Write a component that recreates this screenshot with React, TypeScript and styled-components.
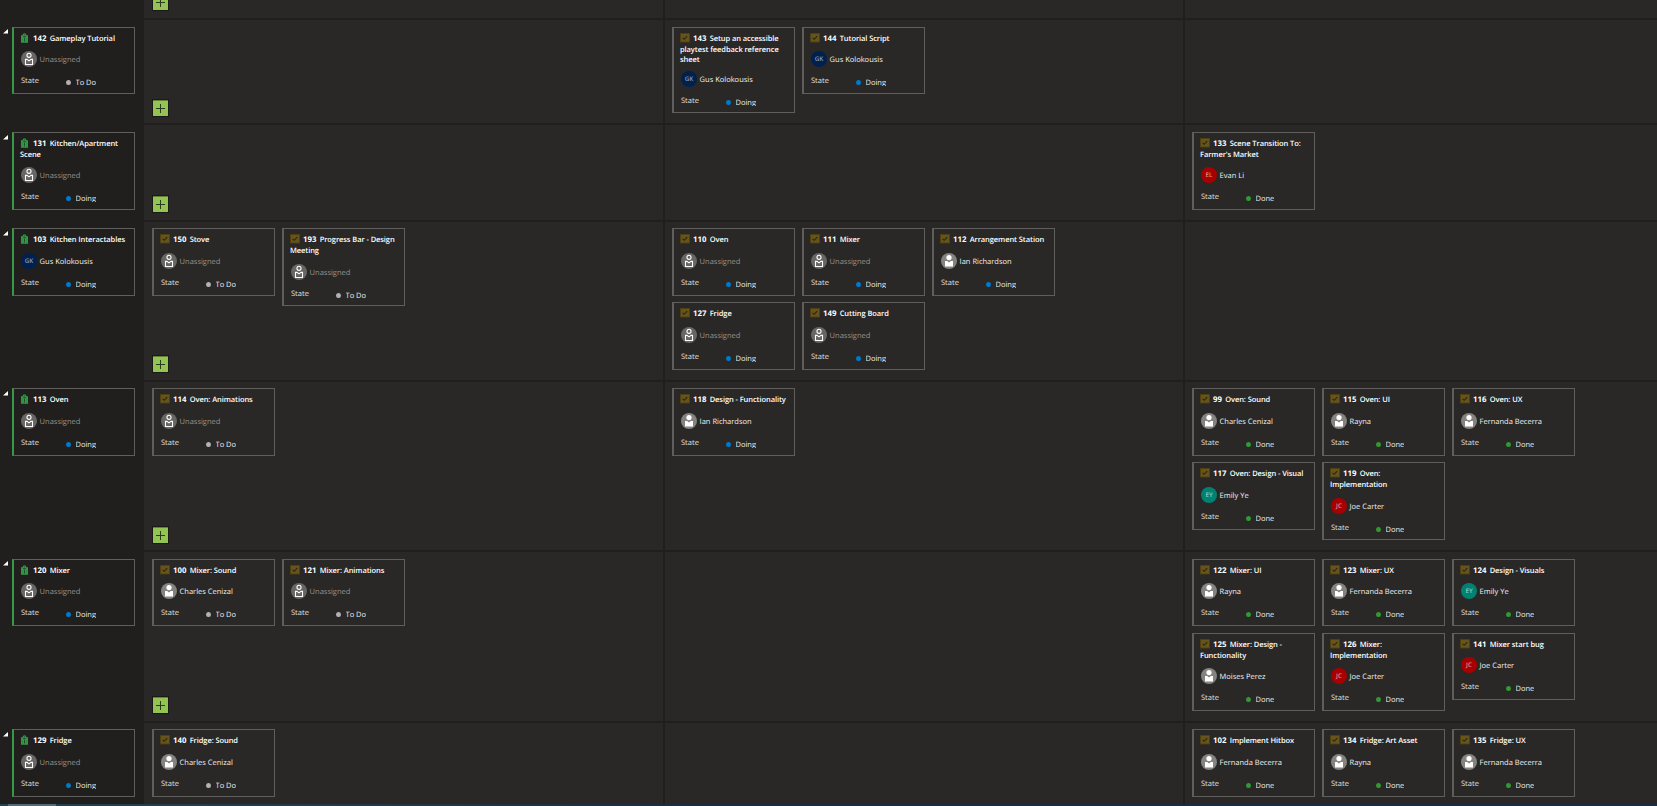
import React from 'react';
import styled, { createGlobalStyle } from 'styled-components';

const GlobalStyle = createGlobalStyle`
  * { box-sizing: border-box; }
  body {
    margin: 0;
    background: #201f1e;
    overflow: hidden;
    font-family: 'Open Sans', 'Noto Sans', sans-serif;
    text-rendering: geometricPrecision;
  }
`;

type Person = 'none' | 'gus' | 'evan' | 'ian' | 'charles' | 'rayna' | 'fernanda' | 'emily' | 'joe' | 'moises';
type State = 'To Do' | 'Doing' | 'Done';

interface Item {
  id: number;
  title: string[];
  who: Person;
  state: State;
}

interface Lane {
  height: number;
  top: number;
  line: number;
  cardHeight: number;
  tallFoot: number;
  plusGap: number;
  arrow: number;
  story: Item;
  columns: [Item[], Item[], Item[]];
}

const people: Record<Person, { name: string; initials?: string; color?: string; ink?: string }> = {
  none: { name: 'Unassigned' },
  gus: { name: 'Gus Kolokousis', initials: 'GK', color: '#002050', ink: '#8e9cb2' },
  evan: { name: 'Evan Li', initials: 'EL', color: '#a80000', ink: '#dc9090' },
  ian: { name: 'Ian Richardson' },
  charles: { name: 'Charles Cenizal' },
  rayna: { name: 'Rayna' },
  fernanda: { name: 'Fernanda Becerra' },
  emily: { name: 'Emily Ye', initials: 'EY', color: '#008272', ink: '#8accc3' },
  joe: { name: 'Joe Carter', initials: 'JC', color: '#a80000', ink: '#dc9090' },
  moises: { name: 'Moises Perez' },
};

const stateColors: Record<State, string> = { 'To Do': '#b2b2b2', Doing: '#007acc', Done: '#339933' };

const item = (id: number, title: string, who: Person, state: State): Item => ({
  id,
  title: title.split('|'),
  who,
  state,
});

const lanes: Lane[] = [
  {
    height: 105, top: 7, line: 10, cardHeight: 67, tallFoot: 0, plusGap: 7, arrow: 8,
    story: item(142, 'Gameplay Tutorial', 'none', 'To Do'),
    columns: [
      [],
      [
        item(143, 'Setup an accessible|playtest feedback reference|sheet', 'gus', 'Doing'),
        item(144, 'Tutorial Script', 'gus', 'Doing'),
      ],
      [],
    ],
  },
  {
    height: 97, top: 7, line: 11, cardHeight: 67, tallFoot: 0, plusGap: 8, arrow: 9,
    story: item(131, 'Kitchen/Apartment|Scene', 'none', 'Doing'),
    columns: [[], [], [item(133, "Scene Transition To:|Farmer's Market", 'evan', 'Done')]],
  },
  {
    height: 160, top: 6, line: 11, cardHeight: 68, tallFoot: -1, plusGap: 8, arrow: 8,
    story: item(103, 'Kitchen Interactables', 'gus', 'Doing'),
    columns: [
      [item(150, 'Stove', 'none', 'To Do'), item(193, 'Progress Bar - Design|Meeting', 'none', 'To Do')],
      [
        item(110, 'Oven', 'none', 'Doing'),
        item(111, 'Mixer', 'none', 'Doing'),
        item(112, 'Arrangement Station', 'ian', 'Doing'),
        item(127, 'Fridge', 'none', 'Doing'),
        item(149, 'Cutting Board', 'none', 'Doing'),
      ],
      [],
    ],
  },
  {
    height: 170, top: 6, line: 11, cardHeight: 68, tallFoot: -1, plusGap: 7, arrow: 8,
    story: item(113, 'Oven', 'none', 'Doing'),
    columns: [
      [item(114, 'Oven: Animations', 'none', 'To Do')],
      [item(118, 'Design - Functionality', 'ian', 'Doing')],
      [
        item(99, 'Oven: Sound', 'charles', 'Done'),
        item(115, 'Oven: UI', 'rayna', 'Done'),
        item(116, 'Oven: UX', 'fernanda', 'Done'),
        item(117, 'Oven: Design - Visual', 'emily', 'Done'),
        item(119, 'Oven:|Implementation', 'joe', 'Done'),
      ],
    ],
  },
  {
    height: 171, top: 7, line: 10, cardHeight: 67, tallFoot: 0, plusGap: 8, arrow: 8,
    story: item(120, 'Mixer', 'none', 'Doing'),
    columns: [
      [item(100, 'Mixer: Sound', 'charles', 'To Do'), item(121, 'Mixer: Animations', 'none', 'To Do')],
      [],
      [
        item(122, 'Mixer: UI', 'rayna', 'Done'),
        item(123, 'Mixer: UX', 'fernanda', 'Done'),
        item(124, 'Design - Visuals', 'emily', 'Done'),
        item(125, 'Mixer: Design -|Functionality', 'moises', 'Done'),
        item(126, 'Mixer:|Implementation', 'joe', 'Done'),
        item(141, 'Mixer start bug', 'joe', 'Done'),
      ],
    ],
  },
  {
    height: 81, top: 6, line: 11, cardHeight: 68, tallFoot: 0, plusGap: 8, arrow: 8,
    story: item(129, 'Fridge', 'none', 'Doing'),
    columns: [
      [item(140, 'Fridge: Sound', 'charles', 'To Do')],
      [],
      [
        item(102, 'Implement Hitbox', 'fernanda', 'Done'),
        item(134, 'Fridge: Art Asset', 'rayna', 'Done'),
        item(135, 'Fridge: UX', 'fernanda', 'Done'),
      ],
    ],
  },
];

const Board = styled.main`
  width: 100vw;
  height: 806px;
  display: flex;
  flex-direction: column;
  overflow: hidden;
  background: #201f1e;
`;

const LaneRow = styled.section<{ $height: number }>`
  display: grid;
  grid-template-columns: 144px 521px 520px minmax(0, 1fr);
  grid-template-rows: ${(p) => p.$height}px;
  height: ${(p) => p.$height}px;
  flex: none;
  overflow: hidden;
`;

const StoryCell = styled.div<{ $top: number }>`
  display: flex;
  align-items: flex-start;
  padding-top: ${(p) => p.$top}px;
`;

const Collapse = styled.div<{ $drop: number }>`
  width: 12px;
  flex: none;
  padding: ${(p) => p.$drop}px 0 0 3px;
  line-height: 0;
`;

const Cell = styled.div<{ $top: number; $left: number; $lastLane?: boolean; $lastColumn?: boolean }>`
  display: flex;
  flex-direction: column;
  justify-content: flex-end;
  align-items: flex-start;
  padding: ${(p) => p.$top}px 0 0 ${(p) => p.$left}px;
  background: #292827;
  border-right: ${(p) => (p.$lastColumn ? 0 : 2)}px solid #201f1e;
  border-bottom: ${(p) => (p.$lastLane ? 0 : 2)}px solid #201f1e;
`;

const CardGrid = styled.div<{ $gap: number }>`
  display: grid;
  grid-template-columns: repeat(3, 123px);
  align-items: start;
  margin-bottom: auto;
  gap: ${(p) => p.$gap}px 7px;
`;

const CardBox = styled.article<{ $height: number; $story?: boolean }>`
  width: 123px;
  height: ${(p) => p.$height}px;
  flex: none;
  display: flex;
  flex-direction: column;
  border: 1px solid #605e5c;
  border-left: 2px solid ${(p) => (p.$story ? '#339947' : '#605e5c')};
  padding: 6px 0 0 6px;
  color: #fff;
  white-space: nowrap;
`;

const TitleLine = styled.div<{ $line: number }>`
  display: flex;
  flex: none;
  align-items: center;
  height: ${(p) => p.$line}px;
  line-height: ${(p) => p.$line}px;
  font-size: 7.5px;
  font-weight: 600;
  letter-spacing: -0.085px;
`;

const TypeIcon = styled.span`
  width: 13px;
  height: 10px;
  flex: none;
  margin-top: -3px;
  line-height: 0;
`;

const ItemId = styled.b`
  margin-right: 3.3px;
  font-size: 7.8px;
  font-weight: 700;
  letter-spacing: 0;
`;

const Details = styled.div<{ $foot: number }>`
  flex: none;
  margin-top: auto;
  height: ${(p) => 42 + p.$foot}px;
  padding-left: 1px;
`;

const Assignee = styled.div<{ $muted: boolean }>`
  display: flex;
  align-items: center;
  height: 16px;
  gap: 2.6px;
  font-size: 7.5px;
  color: ${(p) => (p.$muted ? '#979390' : '#f3f2f1')};
`;

const AssigneeName = styled.span`
  padding-top: 2px;
  line-height: 14px;
`;

const Initials = styled.span<{ $color?: string; $ink?: string }>`
  width: 16px;
  height: 16px;
  flex: none;
  border-radius: 50%;
  background: ${(p) => p.$color};
  color: ${(p) => p.$ink};
  font-size: 6.3px;
  font-weight: 600;
  text-align: center;
  line-height: 16px;
`;

const StateRow = styled.div`
  display: flex;
  margin-top: 8px;
  font-size: 7.5px;
  line-height: 10px;
  color: #e4e2e0;
`;

const StateLabel = styled.span`
  width: 45px;
  padding-top: 1px;
`;

const Dot = styled.i<{ $color: string }>`
  width: 5px;
  height: 5.5px;
  margin: 4.6px 4.5px 0 0;
  border-radius: 50%;
  background: ${(p) => p.$color};
`;

const StateValue = styled.span`
  height: 8px;
  margin-top: 3px;
  overflow: hidden;
  color: #f0eeec;
`;

const AddButton = styled.button<{ $gap: number }>`
  width: 17px;
  height: 18px;
  flex: none;
  display: flex;
  align-items: center;
  justify-content: center;
  margin: 0 0 ${(p) => p.$gap - 1}px 0;
  padding: 0;
  border: 1px solid #1b1a19;
  background: #92c353;
  box-shadow: inset 0 1px 0 #618238;
`;

const ScrollTrack = styled.div`
  height: 2px;
  flex: none;
  padding-left: 8px;
  background: linear-gradient(90deg, #24414c 0, #243a48 300px, #1b2b43 700px, #1b2b43 100%);
`;

const ScrollThumb = styled.div`
  width: 48px;
  height: 2px;
  background: #536b74;
`;

const TaskGlyph = () => (
  <svg width="10" height="10" viewBox="0 0 10 10">
    <rect width="10" height="9.5" fill="#4d3f12" />
    <rect x="0.9" y="0.9" width="8.2" height="7.7" fill="#66541a" />
    <path d="M2.6 4.9 4.2 6.3 7.2 3.1" fill="none" stroke="#292415" strokeWidth="1.1" />
  </svg>
);

const StoryGlyph = () => (
  <svg width="9" height="10" viewBox="0 0 9 10">
    <path d="M1 2.300h1.600C2.800 1.200 3.500.3 4.500.3S6.200 1.200 6.400 2.300H8v7.400H1z" fill="#339947" />
    <path d="M4.500 1.300v.9M3 3.400h3M4.500 4.600V8.500" stroke="#1c4a27" strokeWidth=".9" />
    <path d="M2.300 4.500V8.500M6.700 4.500V8.500" stroke="#287c39" strokeWidth=".5" />
  </svg>
);

const UnassignedGlyph = () => (
  <svg width="16" height="16" viewBox="0 0 16 16">
    <circle cx="8" cy="8" r="8" fill="#686664" />
    <circle cx="8" cy="4.300" r="2.050" fill="none" stroke="#fff" strokeWidth="1.100" />
    <path d="M4.500 8.400h1.500L8 9.900l2-1.500h1.500v5.100h-7z" fill="none" stroke="#fff" strokeWidth="1.100" />
  </svg>
);

const PersonGlyph = () => (
  <svg width="16" height="16" viewBox="0 0 16 16">
    <circle cx="8" cy="8" r="8" fill="#858381" />
    <circle cx="8" cy="4.600" r="2.600" fill="#fff" />
    <path d="M4 7.900h2.200L8 9.500l1.800-1.600H12v5.600H4z" fill="#fff" />
  </svg>
);

const PlusGlyph = () => (
  <svg width="9" height="9" viewBox="0 0 9 9">
    <path d="M0 4.500h9M4.500 0v9" stroke="#2b3a1a" strokeWidth="1" />
  </svg>
);

const Avatar = ({ who }: { who: Person }) => {
  const person = people[who];
  if (who === 'none') return <UnassignedGlyph />;
  if (!person.initials) return <PersonGlyph />;
  return (
    <Initials $color={person.color} $ink={person.ink}>
      {person.initials}
    </Initials>
  );
};

const Card = ({ data, lane, story }: { data: Item; lane: Lane; story?: boolean }) => {
  const lines = data.title.length;
  const height = lines === 1 ? lane.cardHeight : lines === 2 ? 78 : 86;
  const foot = lines === 1 ? 0 : lines === 2 ? lane.tallFoot : -1;
  return (
    <CardBox $height={height} $story={story}>
      {data.title.map((text, index) => (
        <TitleLine key={text} $line={index === 0 ? 11 : lane.line}>
          {index === 0 && (
            <>
              <TypeIcon>{story ? <StoryGlyph /> : <TaskGlyph />}</TypeIcon>
              <ItemId>{data.id}</ItemId>
            </>
          )}
          {text}
        </TitleLine>
      ))}
      <Details $foot={foot}>
        <Assignee $muted={data.who === 'none'}>
          <Avatar who={data.who} />
          <AssigneeName>{people[data.who].name}</AssigneeName>
        </Assignee>
        <StateRow>
          <StateLabel>State</StateLabel>
          <Dot $color={stateColors[data.state]} />
          <StateValue>{data.state}</StateValue>
        </StateRow>
      </Details>
    </CardBox>
  );
};

const columnInset = [8, 7, 7];

export default function App() {
  return (
    <>
      <GlobalStyle />
      <Board>
        <LaneRow $height={20}>
          <StoryCell $top={0} />
          <Cell $top={0} $left={8}>
            <AddButton $gap={8}>
              <PlusGlyph />
            </AddButton>
          </Cell>
          <Cell $top={0} $left={7} />
          <Cell $top={0} $left={7} $lastColumn />
        </LaneRow>
        {lanes.map((lane, laneIndex) => {
          const last = laneIndex === lanes.length - 1;
          return (
            <LaneRow key={lane.story.id} $height={lane.height}>
              <StoryCell $top={lane.top}>
                <Collapse $drop={lane.arrow - lane.top}>
                  <svg width="5" height="5" viewBox="0 0 5 5">
                    <path d="M5 0v4.500H0z" fill="#fff" />
                  </svg>
                </Collapse>
                <Card data={lane.story} lane={lane} story />
              </StoryCell>
              {lane.columns.map((cards, column) => (
                <Cell
                  key={column}
                  $top={lane.top}
                  $left={columnInset[column]}
                  $lastLane={last}
                  $lastColumn={column === 2}
                >
                  <CardGrid $gap={74 - lane.cardHeight}>
                    {cards.map((card) => (
                      <Card key={card.id} data={card} lane={lane} />
                    ))}
                  </CardGrid>
                  {column === 0 && !last && (
                    <AddButton $gap={lane.plusGap}>
                      <PlusGlyph />
                    </AddButton>
                  )}
                </Cell>
              ))}
            </LaneRow>
          );
        })}
        <ScrollTrack>
          <ScrollThumb />
        </ScrollTrack>
      </Board>
    </>
  );
}
